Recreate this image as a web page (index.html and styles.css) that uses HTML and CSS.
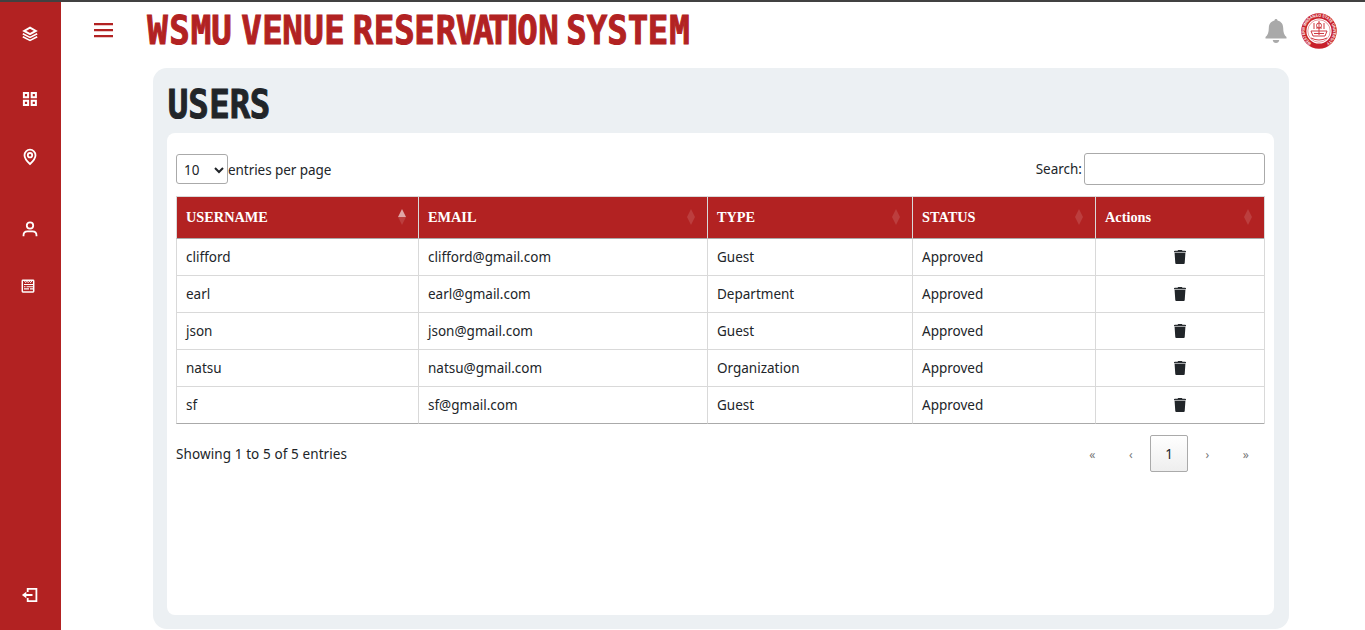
FILE: index.html
```html
<!DOCTYPE html>
<html lang="en">
<head>
<meta charset="utf-8">
<title>WSMU Venue Reservation System</title>
<link rel="stylesheet" href="styles.css">
</head>
<body>
<svg width="0" height="0" class="defs">
  <symbol id="trash" viewBox="0 0 14 16"><path fill="#212529" d="M1 2.900V2.200Q1 1.700 2 1.700h2.500L5.200 1h3.600l.7.700H12q1 0 1 .5v.7zM1.600 4h10.800l-.7 10.200q-.1.800-1 .8H3.300q-.9 0-1-.8z"/><path fill="#a5a7a9" d="M1.300 2.900h11.400V4H1.300z"/></symbol>
</svg>
<div class="app">
  <nav class="sidebar">
    <a class="item brand"><svg width="16" height="16" viewBox="0 0 16 16" fill="none" stroke="#fff"><path stroke-width="2" d="M8 1.600 13.800 4.900 8 8.200 2.200 4.900z"/><path stroke-width="1.600" d="M.8 7.700l7.200 3.700 7.200-3.700M.8 10.700l7.200 3.700 7.200-3.700"/></svg></a>
    <a class="item grid"><svg width="16" height="16" viewBox="0 0 16 16" fill="none" stroke="#fff" stroke-width="2"><path d="M1.900 2h4.200v4.200H1.900zM9.700 2h4.200v4.200H9.700zM1.900 9.800h4.200V14H1.900zM9.700 9.800h4.200V14H9.700z"/></svg></a>
    <a class="item pin"><svg width="16" height="18" viewBox="0 0 16 18" fill="none" stroke="#fff" stroke-width="1.800"><path d="M8 16C5 13.300 2.500 10.500 2.500 7.200a5.500 5.500 0 0 1 11 0C13.500 10.500 11 13.300 8 16z"/><circle cx="8" cy="7.200" r="2.200"/></svg></a>
    <a class="item user"><svg width="16" height="18" viewBox="0 0 16 18" fill="none" stroke="#fff" stroke-width="1.800"><circle cx="8" cy="5.500" r="3.200"/><path d="M1.500 16.200v-.8q0-4 4-4h5q4 0 4 4v.8"/></svg></a>
    <a class="item list"><svg width="14" height="14" viewBox="0 0 14 14" fill="none" stroke="#fff"><rect x="1.300" y="1.300" width="11.400" height="11.600" rx=".6" stroke-width="1.500"/><path d="M3.500 2l1.200 1.600L6 2.200l1.200 1.400 1.200-1.400 1.200 1.400L10.800 2" stroke-width="1"/><path d="M3 5.500h9M3 7.700h1.500M5.500 7.700H12M3 9.900h5M9 9.900h3" stroke-width="1.100"/></svg></a>
    <a class="item logout"><svg width="18" height="16" viewBox="0 0 18 16" fill="none" stroke="#fff" stroke-width="1.800"><path d="M6.700 5V1.900h8.700v12.200H6.700V11M4 8h7.500"/><path d="M5.300 4.800v6.400L.9 8z" fill="#fff" stroke="none"/></svg></a>
  </nav>
  <div class="main">
    <header class="topbar">
      <svg class="menu" width="19" height="15" viewBox="0 0 19 15"><path fill="#b22222" d="M0 0h19v2.200H0zM0 6h19v2.200H0zM0 12h19v2.200H0z"/></svg>
      <svg class="title" width="550" height="46" viewBox="0 0 621.5 46" preserveAspectRatio="none">
        <g fill="#b22222" stroke="#b22222">
          <text y="33.500" x="14.1 39 63.3 86.4">WSMU</text>
          <text y="33.500" x="120.3 144.1 166.7 190.4 214.1">VENUE</text>
          <text y="33.500" x="246.3 270.1 293.2 315.8 340.1 362.7 382.5 399.4 415.3 432.2 455.9">RESERVAT<tspan class="narrow">I</tspan>ON</text>
          <text y="33.500" x="487.6 510.7 533.9 557.1 579.7 604">SYSTEM</text>
        </g>
      </svg>
      <svg class="bell" width="22" height="26" viewBox="0 0 22 26" fill="#a9a9a9"><path d="M9.500 2.500C9.500.5 12.500.5 12.500 2.500c4 1 5.700 4 5.700 7.500 0 4.500 1 7 3.300 9v1.500H.5V19c2.300-2 3.300-4.500 3.300-9 0-3.500 1.700-6.500 5.700-7.500zM7.700 22h6.600q-.5 3-3.300 3t-3.300-3z"/></svg>
      <svg class="seal" width="36" height="36" viewBox="0 0 36 36">
        <defs><path id="ring" d="M10.600 30.100A14.200 14.200 0 1 1 25.400 30.100"/></defs>
        <circle cx="18" cy="18" r="17.800" fill="#c8202a"/>
        <circle cx="18" cy="18" r="12.600" fill="#fff"/>
        <text class="seal-text"><textPath href="#ring" textLength="73" lengthAdjust="spacingAndGlyphs">WESTERN MINDANAO STATE UNIVERSITY</textPath></text>
        <g fill="none" stroke="#cf3a42" stroke-width="1"><circle cx="18" cy="18" r="11.200" stroke-width=".5"/><path d="M10 18h16l-2 5H12zM13 10v6M18 8v14M23 10v6M15 15h6M10 25q8 4 16 0M13 20.500h10"/><circle cx="18" cy="12.500" r="2.500"/></g>
      </svg>
    </header>
    <main class="panel">
      <svg class="heading" width="120" height="43" viewBox="0 0 135.6 43" preserveAspectRatio="none"><g fill="#212529" stroke="#212529"><text y="34.500" x="13.6 36.7 60.5 83.6 106.2">USERS</text></g></svg>
      <section class="card">
        <div class="controls">
          <label class="length"><span class="select">10<svg width="10" height="7" viewBox="0 0 10 7"><path d="M1 1l4 4 4-4" fill="none" stroke="#212529" stroke-width="2"/></svg></span><span class="length-text">entries per page</span></label>
          <label class="search"><span class="search-text">Search:</span><input type="text" class="field"></label>
        </div>
        <table class="users">
          <colgroup><col class="c1"><col class="c2"><col class="c3"><col class="c4"><col class="c5"></colgroup>
          <thead><tr>
            <th><div class="th asc">USERNAME<i class="sort"></i></div></th>
            <th><div class="th">EMAIL<i class="sort"></i></div></th>
            <th><div class="th">TYPE<i class="sort"></i></div></th>
            <th><div class="th">STATUS<i class="sort"></i></div></th>
            <th><div class="th">Actions<i class="sort"></i></div></th>
          </tr></thead>
          <tbody>
            <tr><td>clifford</td><td>clifford@gmail.com</td><td>Guest</td><td>Approved</td><td class="act"><svg width="14" height="16"><use href="#trash"/></svg></td></tr>
            <tr><td>earl</td><td>earl@gmail.com</td><td>Department</td><td>Approved</td><td class="act"><svg width="14" height="16"><use href="#trash"/></svg></td></tr>
            <tr><td>json</td><td>json@gmail.com</td><td>Guest</td><td>Approved</td><td class="act"><svg width="14" height="16"><use href="#trash"/></svg></td></tr>
            <tr><td>natsu</td><td>natsu@gmail.com</td><td>Organization</td><td>Approved</td><td class="act"><svg width="14" height="16"><use href="#trash"/></svg></td></tr>
            <tr><td>sf</td><td>sf@gmail.com</td><td>Guest</td><td>Approved</td><td class="act"><svg width="14" height="16"><use href="#trash"/></svg></td></tr>
          </tbody>
        </table>
        <div class="footer">
          <span class="info">Showing 1 to 5 of 5 entries</span>
          <div class="pages"><span>«</span><span>‹</span><span class="current">1</span><span>›</span><span>»</span></div>
        </div>
      </section>
    </main>
  </div>
</div>
</body>
</html>
```
FILE: styles.css
```css
* { box-sizing: border-box; }
body { margin: 0; height: 630px; overflow: hidden; background: #fff; color: #212529; font-family: "Noto Sans", sans-serif; font-size: 13.5px; }
svg { display: block; flex: none; }
.defs { position: absolute; }
.app { display: flex; height: 630px; border-top: 2px solid #414141; }
.sidebar { width: 61px; flex: none; background: #b22222; display: flex; flex-direction: column; align-items: center; padding: 24px 1px 0 0; }
.item { display: block; }
.grid { margin-top: 49px; }
.pin { margin-top: 41px; }
.user { margin-top: 54px; }
.list { margin-top: 41px; margin-right: 5px; }
.logout { margin-top: auto; margin-bottom: 27px; }
.main { flex: 1; padding-right: 76px; }
.topbar { display: flex; height: 66px; padding-left: 33px; }
.menu { margin-top: 21px; }
.title { margin: 8px 0 0 32px; overflow: visible; }
.title text, .heading text { font-family: "DejaVu Sans Mono", monospace; font-weight: 700; font-size: 38.5px; stroke-width: 1px; text-anchor: middle; }
.title .narrow { font-family: "DejaVu Sans", sans-serif; }
.bell { margin: 16px 0 0 auto; }
.seal { margin: 11px -48px 0 14px; }
.seal-text { font-family: "Liberation Sans", sans-serif; font-weight: 700; font-size: 4.2px; fill: #fff; }
.panel { margin-left: 92px; height: 561px; background: #ecf0f3; border-radius: 14px; padding: 14px 15px 14px 14px; }
.heading { margin: 1px 0 7px -1px; }
.card { height: 482px; background: #fff; border-radius: 8px; padding: 20px 9px 0; }
.controls { display: flex; justify-content: space-between; height: 43px; }
.length { display: flex; height: 32px; align-items: center; }
.select { display: flex; align-items: center; justify-content: space-between; width: 52px; height: 30px; border: 1px solid #aaa; border-radius: 3px; padding: 2px 3px 0 7px; }
.length-text { padding-top: 2px; letter-spacing: -.06px; }
.search { display: flex; height: 32px; align-items: center; gap: 2px; }
.field { width: 181px; height: 32px; margin: 0; border: 1px solid #aaa; border-radius: 3px; background: #fff; }
.users { table-layout: fixed; width: 1089px; border-collapse: separate; border-spacing: 0; border-right: 1px solid #d9d9d9; }
.c1 { width: 242px; }
.c2 { width: 289px; }
.c3 { width: 205px; }
.c4 { width: 183px; }
.c5 { width: 169px; }
th { height: 43px; padding: 0 9px; background: #b22222; color: #fff; border: 1px solid #d9d9d9; border-right: 0; border-bottom-color: #aaa; font: 700 14.3px "Liberation Serif", serif; text-align: left; }
.th { display: flex; align-items: center; justify-content: space-between; }
.sort { display: flex; flex-direction: column; margin: -2px 3px 0 0; }
.sort::before, .sort::after { content: ""; border: 4.5px solid transparent; opacity: .13; }
.sort::before { border-bottom: 8px solid #fff; border-top: 0; }
.sort::after { border-top: 8px solid #fff; border-bottom: 0; }
.asc .sort::before { opacity: .6; }
td { height: 37px; padding: 0 9px; border-left: 1px solid #d9d9d9; border-bottom: 1px solid #d9d9d9; }
tr:last-child td { border-bottom-color: #aaa; }
.act svg { margin: 0 auto; }
.footer { display: flex; justify-content: space-between; padding-top: 11px; }
.info { padding-top: 10px; letter-spacing: .1px; }
.pages { display: flex; }
.pages span { width: 38.5px; height: 37px; display: flex; align-items: center; justify-content: center; color: #777; font-size: 12px; padding-top: 2px; }
.pages .current { width: 38px; border: 1px solid #aaa; border-radius: 2px; background: linear-gradient(#fff, #eee); color: #212529; font-size: 13.5px; padding-top: 0; }
```
